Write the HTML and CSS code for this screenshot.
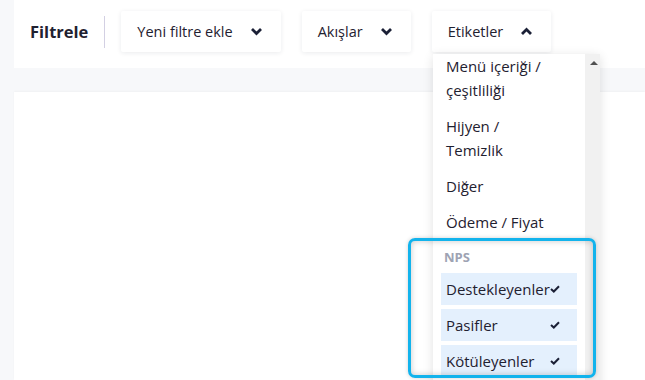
FILE: index.html
```html
<!DOCTYPE html>
<html lang="tr">
<head>
    <meta charset="UTF-8">
    <meta name="viewport" content="width=device-width, initial-scale=1.0">
    <title>Filtrele</title>
    <link rel="stylesheet" href="styles.css">
</head>
<body>
    <div class="page">
        <div class="topbar">
            <span class="title">Filtrele</span>
            <span class="divider"></span>
            <button class="filter-btn">Yeni filtre ekle
                <svg class="chev" width="13" height="9" viewBox="0 0 13 9"><polyline points="2,2 6.5,6.5 11,2"/></svg>
            </button>
            <button class="filter-btn">Akışlar
                <svg class="chev" width="13" height="9" viewBox="0 0 13 9"><polyline points="2,2 6.5,6.5 11,2"/></svg>
            </button>
            <button class="filter-btn">Etiketler
                <svg class="chev" width="13" height="9" viewBox="0 0 13 9"><polyline points="2,7 6.5,2.5 11,7"/></svg>
            </button>
        </div>
        <div class="band"></div>
        <div class="card"></div>
    </div>

    <div class="dropdown">
        <ul class="menu-list">
            <li class="item">Menü içeriği / çeşitliliği</li>
            <li class="item">Hijyen / Temizlik</li>
            <li class="item">Diğer</li>
            <li class="item">Ödeme / Fiyat</li>
            <li class="group">NPS</li>
            <li class="item selected"><span>Destekleyenler</span>
                <svg class="check" width="10" height="8" viewBox="0 0 10 8"><polyline points="1,4 3.8,6.5 9,1.2"/></svg></li>
            <li class="item selected"><span>Pasifler</span>
                <svg class="check" width="10" height="8" viewBox="0 0 10 8"><polyline points="1,4 3.8,6.5 9,1.2"/></svg></li>
            <li class="item selected"><span>Kötüleyenler</span>
                <svg class="check" width="10" height="8" viewBox="0 0 10 8"><polyline points="1,4 3.8,6.5 9,1.2"/></svg></li>
        </ul>
        <div class="scroll"><span class="arrow-up"></span></div>
    </div>

    <div class="highlight"></div>
</body>
</html>
```

FILE: styles.css
```css
body {
    margin: 0;
    font-family: "Open Sans", Arial, sans-serif;
    color: #1f2130;
    background-color: #f7f8fa;
    height: 380px;
    overflow: hidden;
}
.page {
    padding-left: 14px;
    display: flex;
    flex-direction: column;
    height: 380px;
}
.topbar {
    background-color: #fff;
    height: 68px;
    box-sizing: border-box;
    padding: 11px 0 16px 16px;
    display: flex;
    align-items: center;
}
.title {
    font-weight: 700;
    font-size: 16.5px;
    color: #1f2130;
}
.divider {
    width: 1px;
    height: 32px;
    background-color: #d3d0e3;
    margin: 0 16px;
}
.filter-btn {
    height: 41px;
    display: flex;
    align-items: center;
    gap: 17px;
    padding: 0 18px 0 16px;
    margin-right: 21px;
    background-color: #fff;
    border: none;
    border-radius: 2px;
    box-shadow: 0 1px 5px rgba(20, 30, 60, 0.09);
    font-family: inherit;
    font-size: 14.5px;
    color: #1f2130;
}
.chev polyline {
    fill: none;
    stroke: #1b2036;
    stroke-width: 2.8;
}
.band {
    height: 24px;
    background-color: #f7f8fa;
}
.card {
    flex: 1;
    background-color: #fff;
    box-shadow: 0 -1px 2px rgba(0, 0, 0, 0.03);
}

.dropdown {
    position: absolute;
    left: 433px;
    top: 54px;
    width: 167px;
    height: 340px;
    background-color: #fff;
    display: flex;
    box-shadow: 0 2px 10px rgba(0, 0, 0, 0.12);
}
.menu-list {
    list-style: none;
    margin: 0;
    padding: 0;
    flex: 1;
    margin-top: -6px;
}
.item {
    padding: 6px 32px 6px 13px;
    font-size: 15px;
    line-height: 24px;
}
.group {
    padding: 8px 11px 0;
    line-height: 18px;
    font-size: 13px;
    font-weight: 700;
    color: #9ea3b3;
    margin-bottom: 7px;
}
.item.selected {
    display: flex;
    align-items: center;
    height: 32px;
    box-sizing: border-box;
    margin: 0 8px 4px;
    padding: 0 17px 0 5px;
    background-color: #e4f0fd;
    white-space: nowrap;
}
.check {
    margin-left: auto;
    flex-shrink: 0;
}
.check polyline {
    fill: none;
    stroke: #1b2036;
    stroke-width: 2;
}
.scroll {
    width: 17px;
    background-color: #f1f1f1;
    position: relative;
}
.arrow-up {
    position: absolute;
    left: 5px;
    top: 7px;
    width: 0;
    height: 0;
    border-left: 4px solid transparent;
    border-right: 4px solid transparent;
    border-bottom: 4px solid #505050;
}

.highlight {
    position: absolute;
    left: 408px;
    top: 238px;
    width: 182px;
    height: 134px;
    border: 3px solid #12b3ec;
    border-radius: 7px;
    box-shadow: inset 0 0 6px rgba(0, 0, 0, 0.22), 0 0 4px rgba(0, 0, 0, 0.18);
}
```
